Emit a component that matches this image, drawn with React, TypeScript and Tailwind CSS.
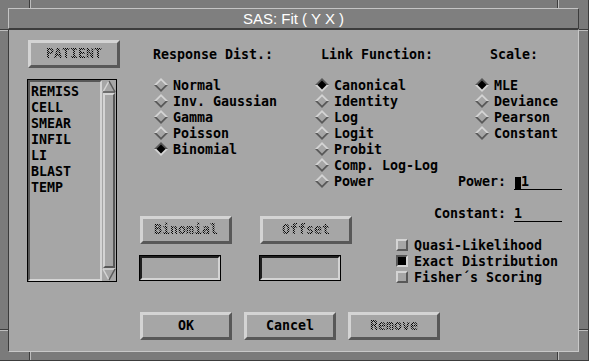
import type { ReactNode } from "react";

const stipple =
  "bg-[image:repeating-conic-gradient(#000_0_25%,transparent_0_50%)] bg-[length:2px_2px] bg-clip-text text-transparent";

const variables = ["REMISS", "CELL", "SMEAR", "INFIL", "LI", "BLAST", "TEMP"];

function Diamond({ on = false }: { on?: boolean }) {
  return (
    <svg width="14" height="14" viewBox="0 0 14 14" className="shrink-0">
      <polygon points="0,7 7,0 14,7" fill={on ? "#585858" : "#d4d4d4"} />
      <polygon points="0,7 7,14 14,7" fill={on ? "#d4d4d4" : "#585858"} />
      <polygon points="7,2.5 11.5,7 7,11.5 2.5,7" fill={on ? "#000000" : "#a6a6a6"} />
    </svg>
  );
}

function Radio({ label, on }: { label: string; on?: boolean }) {
  return (
    <div className="flex h-4 items-center gap-[5px] whitespace-nowrap">
      <Diamond on={on} />
      <span className="pt-px">{label}</span>
    </div>
  );
}

function Check({ label, on }: { label: string; on?: boolean }) {
  return (
    <div className="flex h-4 items-center gap-[6px] whitespace-nowrap">
      <div
        className={
          on
            ? "h-3 w-3 shrink-0 border-2 border-t-[#585858] border-l-[#585858] border-r-[#d4d4d4] border-b-[#d4d4d4] bg-black"
            : "h-3 w-3 shrink-0 border-2 border-t-[#d4d4d4] border-l-[#d4d4d4] border-r-[#585858] border-b-[#585858]"
        }
      />
      <span className="pt-px">{label}</span>
    </div>
  );
}

function Button({ children, disabled }: { children: ReactNode; disabled?: boolean }) {
  return (
    <div className="flex h-[28px] w-[92px] shrink-0 items-center justify-center border-[3px] border-t-[#d4d4d4] border-l-[#d4d4d4] border-r-[#585858] border-b-[#585858]">
      <span className={disabled ? stipple : ""}>{children}</span>
    </div>
  );
}

function Field() {
  return (
    <div className="h-[26px] w-[82px] shrink-0 border border-black">
      <div className="h-full border-2 border-t-[#1e1e1e] border-l-[#1e1e1e] border-r-[#d4d4d4] border-b-[#d4d4d4]" />
    </div>
  );
}

function ListBox() {
  return (
    <div className="mt-[11px] flex h-[203px] w-[90px] border border-black">
      <div className="flex-1 border-2 border-t-[#585858] border-l-[#585858] border-r-[#d4d4d4] border-b-[#d4d4d4] pl-px pt-[2px]">
        {variables.map((v) => (
          <div key={v} className="h-4">
            {v}
          </div>
        ))}
      </div>
      <div className="flex w-[14px] flex-col">
        <svg width="14" height="13" viewBox="0 0 14 13">
          <polygon points="7,1 13,12 1,12" fill="#a6a6a6" />
          <line x1="1" y1="12" x2="7" y2="1" stroke="#d4d4d4" strokeWidth="1.5" />
          <line x1="7" y1="1" x2="13" y2="12" stroke="#585858" strokeWidth="1.5" />
          <line x1="13" y1="12" x2="1" y2="12" stroke="#585858" strokeWidth="1.5" />
        </svg>
        <div className="mx-px flex-1 border-2 border-t-[#d4d4d4] border-l-[#d4d4d4] border-r-[#585858] border-b-[#585858]" />
        <svg width="14" height="13" viewBox="0 0 14 13">
          <polygon points="1,1 13,1 7,12" fill="#a6a6a6" />
          <line x1="1" y1="1" x2="13" y2="1" stroke="#d4d4d4" strokeWidth="1.5" />
          <line x1="1" y1="1" x2="7" y2="12" stroke="#d4d4d4" strokeWidth="1.5" />
          <line x1="13" y1="1" x2="7" y2="12" stroke="#585858" strokeWidth="1.5" />
        </svg>
      </div>
    </div>
  );
}

export default function App() {
  return (
    <div className="relative flex h-[361px] w-[589px] flex-col border-r border-b border-[#3c3c3c] bg-[#7b7b7b] pt-[8px] pr-[9px] pb-[8px] pl-[8px] font-['DejaVu_Sans_Mono',monospace] text-[13.3px] font-bold leading-4 text-black">
      {/* resize corner marks on the frame */}
      <div className="absolute top-0 left-[29px] h-[8px] w-px bg-[#3c3c3c]" />
      <div className="absolute top-0 left-[30px] h-[8px] w-px bg-[#bdbdbd]" />
      <div className="absolute top-0 left-[557px] h-[8px] w-px bg-[#3c3c3c]" />
      <div className="absolute top-0 left-[558px] h-[8px] w-px bg-[#bdbdbd]" />
      <div className="absolute bottom-0 left-[29px] h-[8px] w-px bg-[#3c3c3c]" />
      <div className="absolute bottom-0 left-[30px] h-[8px] w-px bg-[#bdbdbd]" />
      <div className="absolute bottom-0 left-[557px] h-[8px] w-px bg-[#3c3c3c]" />
      <div className="absolute bottom-0 left-[558px] h-[8px] w-px bg-[#bdbdbd]" />
      <div className="absolute top-[29px] left-0 h-px w-[8px] bg-[#3c3c3c]" />
      <div className="absolute top-[30px] left-0 h-px w-[8px] bg-[#bdbdbd]" />
      <div className="absolute top-[329px] left-0 h-px w-[8px] bg-[#3c3c3c]" />
      <div className="absolute top-[330px] left-0 h-px w-[8px] bg-[#bdbdbd]" />
      <div className="absolute top-[29px] right-0 h-px w-[9px] bg-[#3c3c3c]" />
      <div className="absolute top-[30px] right-0 h-px w-[9px] bg-[#bdbdbd]" />
      <div className="absolute top-[329px] right-0 h-px w-[9px] bg-[#3c3c3c]" />
      <div className="absolute top-[330px] right-0 h-px w-[9px] bg-[#bdbdbd]" />

      {/* Title bar */}
      <div className="h-[21px] border-t border-l border-t-[#c4c4c4] border-l-[#c4c4c4] border-r border-b border-r-[#3c3c3c] border-b-[#3c3c3c] bg-[#7f7f7f] text-center font-['Liberation_Sans',Arial,sans-serif] text-[15px] font-normal leading-[19px] text-white">
        SAS: Fit ( Y X )
      </div>

      {/* Client area */}
      <div className="flex flex-1 flex-col border-t border-l border-t-[#3c3c3c] border-l-[#3c3c3c] border-r border-b border-r-[#c9c9c9] border-b-[#c9c9c9] bg-[#a6a6a6]">
        <div className="flex h-[282px]">
          {/* Left column */}
          <div className="ml-[18px] w-[94px] shrink-0 pt-[10px]">
            <div className="ml-px">
              <Button disabled>PATIENT</Button>
            </div>
            <ListBox />
          </div>

          {/* Right area */}
          <div className="ml-[18px] flex">
            <div className="w-[257px] shrink-0 pt-[17px]">
              <div className="flex">
                <div className="ml-[15px] w-[161px] shrink-0">
                  <div className="-ml-px">Response Dist.:</div>
                  <div className="mt-[14px]">
                    <Radio label="Normal" />
                    <Radio label="Inv. Gaussian" />
                    <Radio label="Gamma" />
                    <Radio label="Poisson" />
                    <Radio label="Binomial" on />
                  </div>
                </div>
                <div className="shrink-0">
                  <div className="ml-[6px] whitespace-nowrap">Link Function:</div>
                  <div className="mt-[14px]">
                    <Radio label="Canonical" on />
                    <Radio label="Identity" />
                    <Radio label="Log" />
                    <Radio label="Logit" />
                    <Radio label="Probit" />
                    <Radio label="Comp. Log-Log" />
                    <Radio label="Power" />
                  </div>
                </div>
              </div>
              <div className="mt-[27px] ml-px flex gap-[28px]">
                <Button disabled>Binomial</Button>
                <Button disabled>Offset</Button>
              </div>
              <div className="mt-[11px] flex gap-[38px]">
                <Field />
                <Field />
              </div>
            </div>

            <div className="w-[166px] shrink-0 pt-[17px]">
              <div className="ml-[94px]">Scale:</div>
              <div className="mt-[14px] ml-[79px]">
                <Radio label="MLE" on />
                <Radio label="Deviance" />
                <Radio label="Pearson" />
                <Radio label="Constant" />
              </div>
              <div className="mt-[32px] flex justify-end">
                <span className="pt-px">Power:</span>
                <div className="ml-2 flex h-[17px] w-12 items-start border-b border-black">
                  <span className="mt-[4px] ml-px h-[12px] w-[6px] bg-black" />
                  <span className="pt-px">1</span>
                </div>
              </div>
              <div className="mt-[15px] flex justify-end">
                <span className="pt-px">Constant:</span>
                <div className="ml-2 h-[17px] w-12 border-b border-black pt-px">1</div>
              </div>
              <div className="mt-[15px]">
                <Check label="Quasi-Likelihood" />
                <Check label="Exact Distribution" on />
                <Check label="Fisher´s Scoring" />
              </div>
            </div>
          </div>
        </div>

        {/* Bottom buttons */}
        <div className="ml-[131px] flex gap-3">
          <Button>OK</Button>
          <Button>Cancel</Button>
          <Button disabled>Remove</Button>
        </div>
      </div>
    </div>
  );
}
